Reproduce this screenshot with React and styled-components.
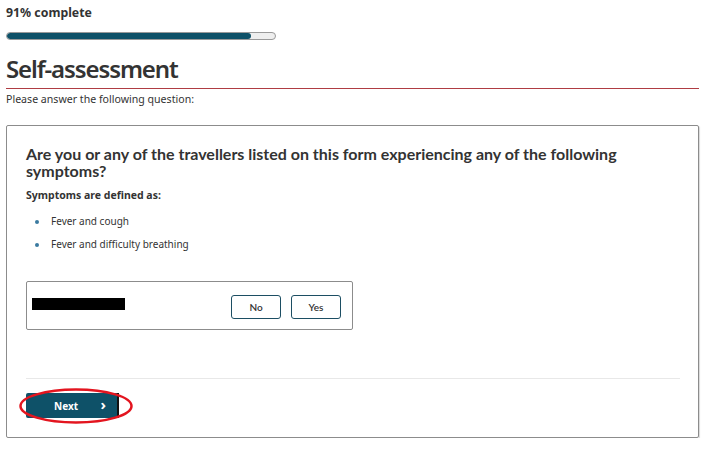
import styled, { createGlobalStyle } from 'styled-components';

const GlobalStyle = createGlobalStyle`
    body {
        margin: 0;
        background: #fff;
        font-family: 'Noto Sans', sans-serif;
        color: #333;
    }
`;

const App = () => {
    return (
        <Page>
            <GlobalStyle />
            <ProgressLabel>91% complete</ProgressLabel>
            <ProgressTrack>
                <ProgressFill style={{ width: '91%' }} />
            </ProgressTrack>
            <Title>Self-assessment</Title>
            <Intro>Please answer the following question:</Intro>
            <Card>
                <Question>Are you or any of the travellers listed on this form experiencing any of the following symptoms?</Question>
                <Defined>Symptoms are defined as:</Defined>
                <List>
                    <Item>Fever and cough</Item>
                    <Item>Fever and difficulty breathing</Item>
                </List>
                <AnswerBox>
                    <Redacted />
                    <Choices>
                        <Choice>No</Choice>
                        <Choice>Yes</Choice>
                    </Choices>
                </AnswerBox>
                <Divider />
                <NextWrap>
                    <NextButton>
                        <span>Next</span>
                        <Chevron>›</Chevron>
                    </NextButton>
                    <Circle viewBox="0 0 114 36">
                        <ellipse cx="57" cy="18" rx="55.5" ry="16.5" fill="none" stroke="#e3151f" strokeWidth="2.5" />
                    </Circle>
                </NextWrap>
            </Card>
        </Page>
    );
};

export default App;

const Page = styled.div`
    width: 693px;
    padding: 4px 0 0 6px;
`;

const ProgressLabel = styled.div`
    font-size: 12.3px;
    font-weight: 700;
    line-height: 18px;
    color: #333;
`;

const ProgressTrack = styled.div`
    margin-top: 10px;
    width: 268px;
    height: 6px;
    border: 1px solid #999;
    border-radius: 4px;
    background: #eee;
    overflow: hidden;
`;

const ProgressFill = styled.div`
    height: 100%;
    background: #0e5168;
    border-radius: 4px;
`;

const Title = styled.h1`
    margin: 15px 0 0;
    font-size: 24px;
    font-weight: 600;
    letter-spacing: -1.1px;
    line-height: 28px;
    color: #333;
    padding-bottom: 5px;
    border-bottom: 1px solid #af3c43;
`;

const Intro = styled.p`
    margin: 3px 0 0;
    font-size: 10.6px;
    line-height: 14px;
    color: #333;
`;

const Card = styled.section`
    margin-top: 19px;
    border: 1px solid #8c8c8c;
    border-radius: 2px;
    box-shadow: 1px 1px 1px rgba(0, 0, 0, 0.15);
    padding: 19px 18px 19px 19px;
`;

const Question = styled.h2`
    margin: 0;
    font-family: Lato, sans-serif;
    font-size: 16px;
    font-weight: 700;
    line-height: 17px;
    color: #333;
    max-width: 620px;
`;

const Defined = styled.p`
    margin: 8px 0 0;
    font-size: 10.5px;
    font-weight: 700;
    line-height: 16px;
`;

const List = styled.ul`
    margin: 12px 0 0;
    padding: 0 0 0 25px;
    list-style: none;
`;

const Item = styled.li`
    position: relative;
    font-size: 10px;
    line-height: 13px;
    margin-bottom: 10px;
    color: #333;

    &::before {
        content: '';
        position: absolute;
        left: -16px;
        top: 5px;
        width: 4px;
        height: 4px;
        border-radius: 50%;
        background: #3a7aa0;
    }
`;

const AnswerBox = styled.div`
    margin-top: 30px;
    width: 309px;
    height: 39px;
    border: 1px solid #8c8c8c;
    border-radius: 2px;
    padding: 4px 11px 4px 5px;
    display: flex;
    justify-content: space-between;
    align-items: flex-start;
`;

const Redacted = styled.div`
    margin-top: 12px;
    width: 93px;
    height: 12px;
    background: #000;
`;

const Choices = styled.div`
    display: flex;
    gap: 10px;
    margin-top: 9px;
`;

const Choice = styled.button`
    width: 50px;
    height: 24px;
    background: #fff;
    border: 1px solid #1c4e63;
    border-radius: 3px;
    font-family: Lato, sans-serif;
    font-size: 10px;
    font-weight: 600;
    color: #333;
    padding: 0;
`;

const Divider = styled.hr`
    margin: 48px 0 0;
    border: 0;
    border-top: 1px solid #e8e8e8;
`;

const NextWrap = styled.div`
    position: relative;
    margin-top: 14px;
    width: 93px;
`;

const NextButton = styled.button`
    width: 93px;
    height: 25px;
    background: #0e5168;
    border: 0;
    border-right: 2px solid #111;
    border-radius: 2px 0 0 2px;
    color: #fff;
    font-family: 'Noto Sans', sans-serif;
    font-weight: 700;
    font-size: 10px;
    display: flex;
    align-items: center;
    padding: 0 11px 0 28px;
    justify-content: space-between;
`;

const Chevron = styled.span`
    font-size: 15px;
    line-height: 1;
    margin-top: -2px;
`;

const Circle = styled.svg`
    position: absolute;
    left: -7px;
    top: -5px;
    width: 114px;
    height: 36px;
    pointer-events: none;
`;
